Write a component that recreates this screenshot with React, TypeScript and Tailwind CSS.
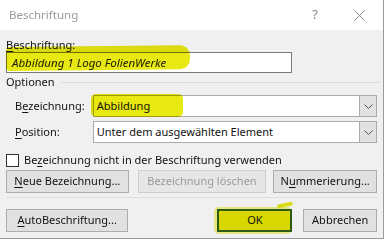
import React from 'react';

const font = { fontFamily: '"Noto Sans", "Open Sans", sans-serif' };

const U = ({ children }: { children: React.ReactNode }) => <span className="underline underline-offset-[2px]">{children}</span>;

const Hi = ({ className }: { className: string }) => (
  <span className={`pointer-events-none absolute bg-[#e8e812] mix-blend-multiply ${className}`} />
);

const Btn = ({ children, className = '' }: { children: React.ReactNode; className?: string }) => (
  <div className={`flex h-[23px] items-center justify-center border border-[#adadad] bg-[#e1e1e1] text-[11px] text-[#111] ${className}`}>
    {children}
  </div>
);

const Combo = ({ children, highlight }: { children: React.ReactNode; highlight?: boolean }) => (
  <div className="relative flex h-[22px] w-[285px] border border-[#acacac] bg-white">
    <div className="flex flex-1 items-center pl-[3px] text-[11px] text-[#111]">{children}</div>
    <div className="flex w-[17px] items-center justify-center border-l border-[#acacac] bg-[#e1e1e1]">
      <svg width="9" height="5" viewBox="0 0 9 5" fill="none">
        <path d="M0.5 0.5 L4.5 4.5 L8.5 0.5" stroke="#555" strokeWidth="1" />
      </svg>
    </div>
    {highlight && <Hi className="-left-[3px] -top-[2px] h-[23px] w-[92px] rounded-[5px]" />}
  </div>
);

export default function App() {
  return (
    <div className="h-[241px] w-[386px] bg-white" style={font}>
      <div className="flex h-[239px] w-[384px] flex-col border-r border-b border-[#9a9a9a]">
        {/* title bar */}
        <div className="flex h-[30px] items-center bg-white pl-[9px] text-[11.5px] text-[#9a9a9a]">
          <span className="flex-1">Beschriftung</span>
          <span className="mr-[36px] text-[13px] text-[#888]">?</span>
          <svg width="11" height="11" viewBox="0 0 11 11" className="mr-[18px]">
            <path d="M0.5 0.5 L10.5 10.5 M10.5 0.5 L0.5 10.5" stroke="#888" strokeWidth="1" />
          </svg>
        </div>

        {/* body */}
        <div className="flex flex-1 flex-col bg-[#f0f0f0] pl-[6px] pr-[6px] pt-[7px] text-[11px] text-[#111]">
          <div className="h-[15px] leading-[15px]">
            <U>B</U>eschriftung:
          </div>
          <div className="relative h-[21px] w-[286px] border border-[#7a7a7a] bg-white">
            <span className="absolute left-[5px] top-[2px] text-[11.5px] italic leading-[15px] text-[#222]">Abbildung 1 Logo FolienWerke</span>
            <Hi className="-left-[1px] -top-[7px] h-[24px] w-[184px] -rotate-[0.6deg] rounded-[4px] rounded-r-[10px]" />
          </div>

          <div className="mt-[1px] flex h-[16px] items-center">
            <span className="leading-[16px]">Optionen</span>
            <div className="ml-[6px] mr-[-3px] h-px flex-1 bg-[#dcdcdc]" />
          </div>

          <div className="mt-[5px] flex items-center">
            <span className="w-[87px] pl-[9px]">
              B<U>e</U>zeichnung:
            </span>
            <Combo highlight>Abbildung</Combo>
          </div>
          <div className="mt-[4px] flex items-center">
            <span className="w-[87px] pl-[9px]">
              <U>P</U>osition:
            </span>
            <Combo>Unter dem ausgewählten Element</Combo>
          </div>

          <div className="mt-[10px] flex h-[14px] items-center">
            <span className="h-[13px] w-[13px] border border-[#333] bg-white" />
            <span className="ml-[5px]">
              Be<U>z</U>eichnung nicht in der Beschriftung verwenden
            </span>
          </div>

          <div className="mt-[3px] flex">
            <Btn className="w-[123px]">
              <U>N</U>eue Bezeichnung...
            </Btn>
            <div className="ml-[9px] flex h-[23px] w-[129px] items-center justify-center border border-[#cfcfcf] bg-[#e6e6e6] text-[#9a9a9a]">
              Bezeichnung löschen
            </div>
            <Btn className="ml-[7px] w-[104px]">
              N<U>u</U>mmerierung...
            </Btn>
          </div>

          <div className="mt-[4px] h-px w-[372px] bg-[#dedede]" />

          <div className="mt-[11px] flex">
            <Btn className="w-[123px]">
              <U>A</U>utoBeschriftung...
            </Btn>
            <div className="relative ml-[89px]">
              <div className="flex h-[23px] w-[75px] items-center justify-center border-2 border-[#2f5f24] bg-[#e2e200] text-[#111]">
                OK
              </div>
              <Hi className="-left-[3px] -top-[2px] h-[27px] w-[78px] rounded-[5px] opacity-50" />
              <Hi className="left-[60px] -top-[6px] h-[4px] w-[16px] -rotate-[12deg] rounded-full" />
            </div>
            <Btn className="ml-[11px] w-[74px]">Abbrechen</Btn>
          </div>
        </div>
      </div>
    </div>
  );
}
